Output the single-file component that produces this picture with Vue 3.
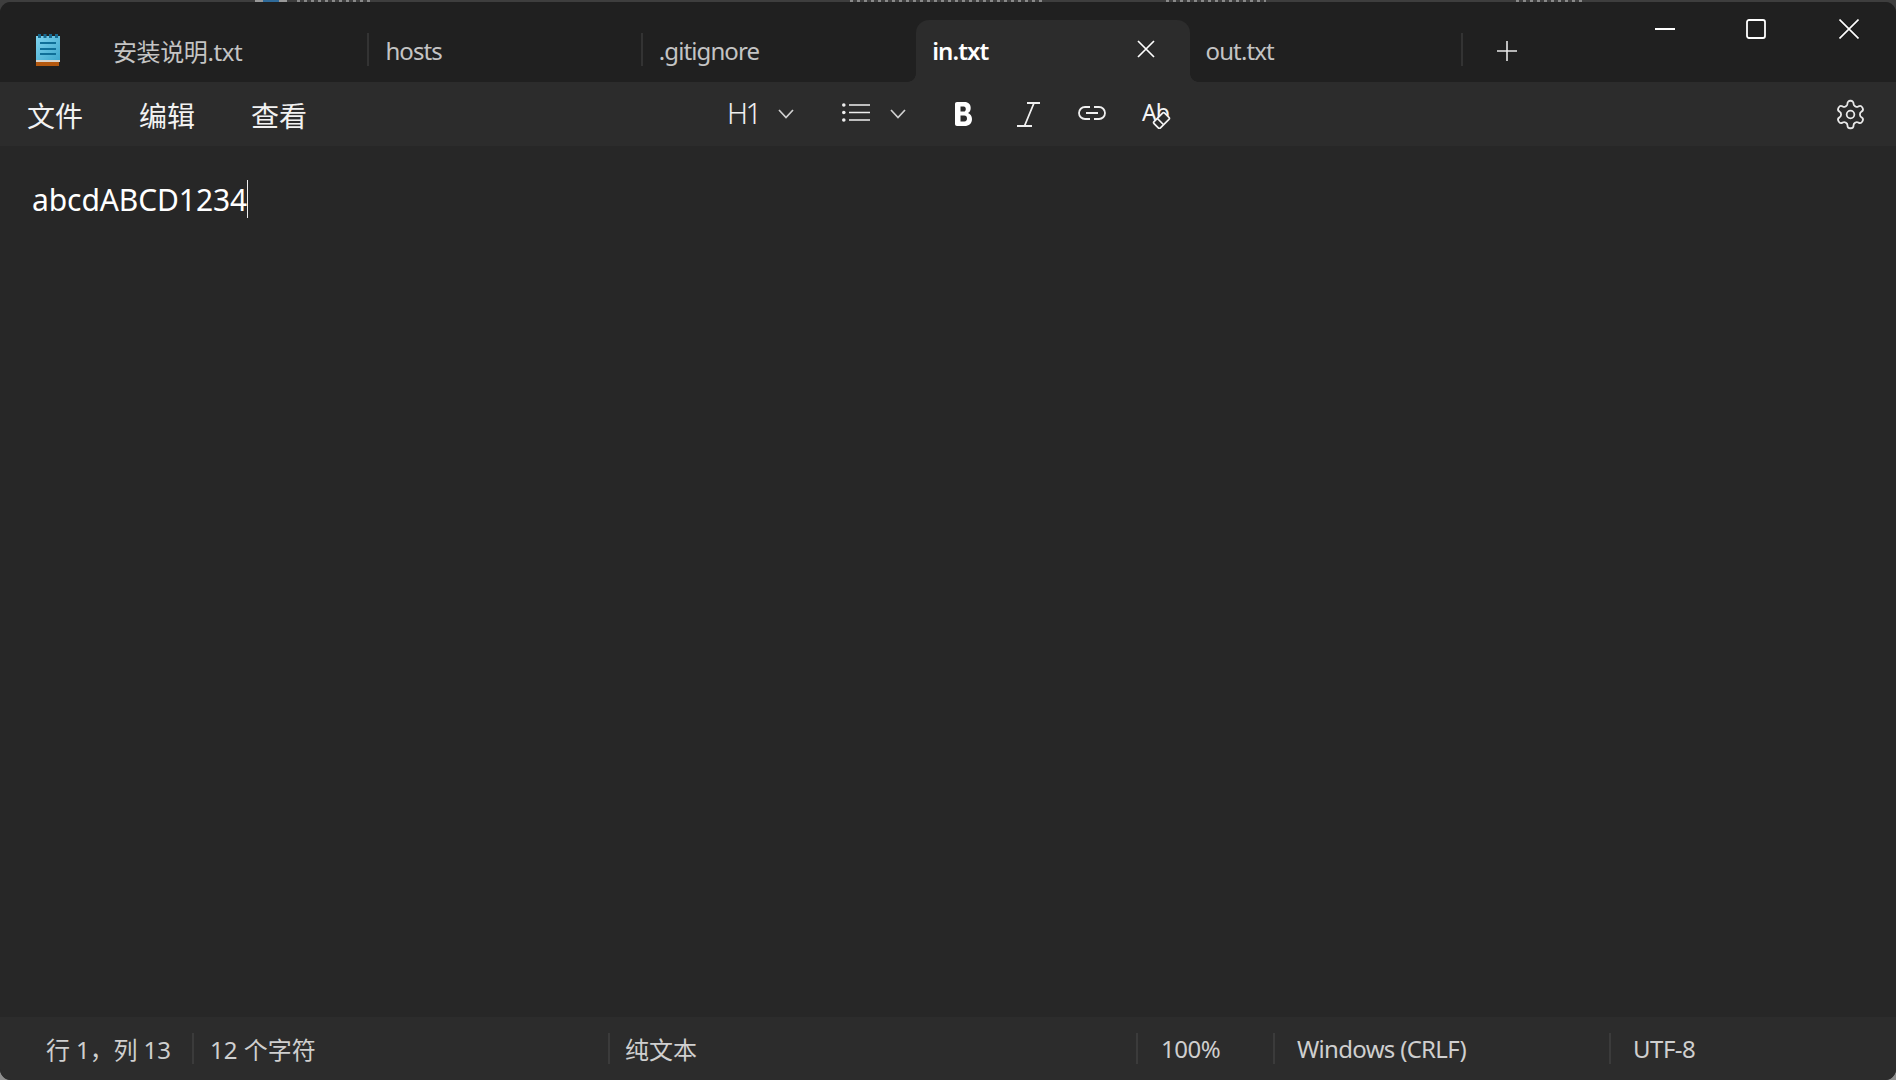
<script setup>
const tabs = [
  { name: '安装说明.txt', cjk: true },
  { name: 'hosts' },
  { name: '.gitignore', noSep: true },
  { name: 'in.txt', active: true },
  { name: 'out.txt' },
]
const menus = ['文件', '编辑', '查看']
const statusItems = [
  { text: '行 1，列 13', cls: 'st-pos' },
  { text: '12 个字符', cls: 'st-count' },
  { text: '纯文本', cls: 'st-type' },
  { text: '100%', cls: 'st-zoom' },
  { text: 'Windows (CRLF)', cls: 'st-eol' },
  { text: 'UTF-8', cls: 'st-enc' },
]
</script>

<template>
  <div class="page">
    <div class="peek">
      <span class="peek-icon"></span>
      <span class="peek-text p1"></span>
      <span class="peek-text p2"></span>
      <span class="peek-text p3"></span>
      <span class="peek-text p4"></span>
    </div>
    <div class="window">
      <div class="tabbar">
        <div class="appicon">
          <svg width="24" height="32" viewBox="0 0 24 32">
            <defs>
              <linearGradient id="pad" x1="0" y1="0" x2="1" y2="1">
                <stop offset="0" stop-color="#7fd3ee" />
                <stop offset="1" stop-color="#3ba6cc" />
              </linearGradient>
            </defs>
            <rect x="0" y="2" width="24" height="25" fill="url(#pad)" />
            <rect x="2" y="0" width="3" height="4" fill="#17698f" />
            <rect x="7.5" y="0" width="3" height="4" fill="#17698f" />
            <rect x="13" y="0" width="3" height="4" fill="#17698f" />
            <rect x="19" y="0" width="3" height="4" fill="#17698f" />
            <rect x="4" y="8" width="16" height="2" fill="#0f6f98" />
            <rect x="4" y="14" width="16" height="2" fill="#0f6f98" />
            <rect x="4" y="19" width="16" height="2" fill="#0f6f98" />
            <rect x="0" y="26" width="24" height="2" fill="#d9d4cc" />
            <rect x="0" y="28" width="23" height="4" fill="#b3580f" />
          </svg>
        </div>
        <div
          v-for="tab in tabs"
          :key="tab.name"
          class="tab"
          :class="{ active: tab.active, nosep: tab.noSep, cjk: tab.cjk }"
        >
          <span class="tab-name">{{ tab.name }}</span>
          <svg v-if="tab.active" class="tab-close" width="18" height="18" viewBox="0 0 18 18">
            <path d="M1 1 17 17M17 1 1 17" stroke="#fff" stroke-width="1.7" fill="none" />
          </svg>
        </div>
        <svg class="newtab" width="20" height="20" viewBox="0 0 20 20">
          <path d="M10 0V20M0 10H20" stroke="#e8e8e8" stroke-width="1.6" fill="none" />
        </svg>
        <div class="wincontrols">
          <svg width="20" height="20" viewBox="0 0 20 20">
            <path d="M0 10H20" stroke="#fff" stroke-width="2" fill="none" />
          </svg>
          <svg class="win-max" width="20" height="20" viewBox="0 0 20 20">
            <rect x="1" y="1" width="18" height="18" rx="2" stroke="#fff" stroke-width="1.8" fill="none" />
          </svg>
          <svg class="win-close" width="20" height="20" viewBox="0 0 20 20">
            <path d="M0.5 0.5 19.5 19.5M19.5 0.5 0.5 19.5" stroke="#fff" stroke-width="1.6" fill="none" />
          </svg>
        </div>
      </div>

      <div class="toolbar">
        <div class="menus">
          <span v-for="m in menus" :key="m" class="menu-item">{{ m }}</span>
        </div>
        <div class="format">
          <span class="h1">H1</span>
          <svg class="chev" width="16" height="10" viewBox="0 0 16 10">
            <path d="M1 1 8 8.5 15 1" stroke="#d0d0d0" stroke-width="1.7" fill="none" />
          </svg>
          <svg class="list" width="28" height="19" viewBox="0 0 28 19">
            <circle cx="1.8" cy="2" r="1.8" fill="#eee" />
            <circle cx="1.8" cy="9.5" r="1.8" fill="#eee" />
            <circle cx="1.8" cy="17" r="1.8" fill="#eee" />
            <path d="M7 2H28M7 9.5H28M7 17H28" stroke="#eee" stroke-width="1.7" fill="none" />
          </svg>
          <svg class="chev chev2" width="16" height="10" viewBox="0 0 16 10">
            <path d="M1 1 8 8.5 15 1" stroke="#d0d0d0" stroke-width="1.7" fill="none" />
          </svg>
          <svg class="bold" width="17" height="24" viewBox="0 0 17 24">
            <path
              fill="#fff"
              fill-rule="evenodd"
              d="M2 0H9.5C13.5 0 15.7 2.5 15.7 6C15.7 8.5 14.6 10.2 13 11C15.4 12 17 14 17 17C17 21.5 14 24 9.5 24H2C.8 24 0 23.2 0 22V2C0 .8.8 0 2 0ZM5.5 4.6V9.6H8.8C10.2 9.6 10.8 8.5 10.8 7C10.8 5.5 10 4.6 8.8 4.6ZM5.5 13.6V19.4H9.3C11.2 19.4 12 18.3 12 16.5C12 14.7 11 13.6 9.3 13.6Z"
            />
          </svg>
          <svg class="italic" width="23" height="25" viewBox="0 0 23 25">
            <path d="M10 1H23M0 24H15M17 1 7.5 24" stroke="#f0f0f0" stroke-width="1.8" fill="none" />
          </svg>
          <svg class="link" width="28" height="14" viewBox="0 0 28 14">
            <path
              d="M12 1H7A6 6 0 0 0 7 13H12M16 1H21A6 6 0 0 1 21 13H16M8 7H20"
              stroke="#f0f0f0"
              stroke-width="1.8"
              fill="none"
            />
          </svg>
          <div class="clearfmt">
            <span class="ab">Ab</span>
            <svg class="eraser" width="30" height="29" viewBox="0 0 30 29">
              <g transform="rotate(-45 19.5 20.5)">
                <rect x="12" y="16" width="15" height="9" rx="1.5" fill="#2c2c2c" stroke="#f4f4f4" stroke-width="1.7" />
                <path d="M18 16V25" stroke="#f4f4f4" stroke-width="1.6" />
              </g>
            </svg>
          </div>
        </div>
        <svg class="gear" width="33" height="33" viewBox="0 0 24 24">
          <path
            d="M12.22 2h-.44a2 2 0 0 0-2 2v.18a2 2 0 0 1-1 1.73l-.43.25a2 2 0 0 1-2 0l-.15-.08a2 2 0 0 0-2.73.73l-.22.38a2 2 0 0 0 .73 2.73l.15.1a2 2 0 0 1 1 1.72v.51a2 2 0 0 1-1 1.74l-.15.09a2 2 0 0 0-.73 2.73l.22.38a2 2 0 0 0 2.73.73l.15-.08a2 2 0 0 1 2 0l.43.25a2 2 0 0 1 1 1.73V20a2 2 0 0 0 2 2h.44a2 2 0 0 0 2-2v-.18a2 2 0 0 1 1-1.73l.43-.25a2 2 0 0 1 2 0l.15.08a2 2 0 0 0 2.73-.73l.22-.39a2 2 0 0 0-.73-2.73l-.15-.08a2 2 0 0 1-1-1.74v-.5a2 2 0 0 1 1-1.74l.15-.09a2 2 0 0 0 .73-2.73l-.22-.38a2 2 0 0 0-2.73-.73l-.15.08a2 2 0 0 1-2 0l-.43-.25a2 2 0 0 1-1-1.73V4a2 2 0 0 0-2-2z"
            stroke="#e8e8e8"
            stroke-width="1.3"
            fill="none"
          />
          <circle cx="12" cy="12" r="2.8" stroke="#e8e8e8" stroke-width="1.3" fill="none" />
        </svg>
      </div>

      <div class="editor">
        <span class="editor-text">abcdABCD1234</span><span class="caret"></span>
      </div>

      <div class="statusbar">
        <template v-for="(item, i) in statusItems" :key="item.text">
          <span class="st-item" :class="item.cls">{{ item.text }}</span>
          <span v-if="i < statusItems.length - 1" class="st-sep"></span>
        </template>
      </div>
    </div>
  </div>
</template>

<style>
body {
  background: #3a3a3a;
  overflow: hidden;
}
</style>

<style scoped>
.page {
  position: relative;
  width: 1896px;
  height: 1080px;
  overflow: hidden;
  background: linear-gradient(#3e3e3e 0, #3e3e3e 100px, #8f8f8f 1040px);
  font-family: "Noto Sans", "Noto Sans CJK SC", sans-serif;
}
.peek {
  position: absolute;
  top: 0;
  left: 0;
  height: 3px;
  display: flex;
  align-items: flex-start;
}
.peek-icon {
  width: 32px;
  height: 2px;
  margin-left: 255px;
  background: linear-gradient(90deg, #999 0 8px, #2f6b9a 8px 24px, #999 24px);
}
.peek-text {
  height: 2px;
  background: repeating-linear-gradient(90deg, #8a8a8a 0 3px, transparent 3px 7px);
}
.p1 {
  width: 74px;
  margin-left: 10px;
}
.p2 {
  width: 195px;
  margin-left: 479px;
}
.p3 {
  width: 100px;
  margin-left: 121px;
}
.p4 {
  width: 70px;
  margin-left: 250px;
}
.window {
  position: absolute;
  top: 2px;
  left: 0;
  width: 1896px;
  height: 1078px;
  border-radius: 11px;
  overflow: hidden;
  display: flex;
  flex-direction: column;
  background: #272727;
}
.tabbar {
  height: 80px;
  flex: none;
  display: flex;
  align-items: flex-end;
  background: #202020;
}
.appicon {
  width: 96px;
  height: 62px;
  flex: none;
  display: flex;
  align-items: flex-start;
  padding: 14px 0 0 36px;
  box-sizing: border-box;
}
.tab {
  position: relative;
  width: 273.4px;
  height: 62px;
  flex: none;
  display: flex;
  align-items: center;
  justify-content: space-between;
  box-sizing: border-box;
  padding: 0 35px 1px 16px;
  color: #c4c4c4;
  font-size: 24px;
  letter-spacing: -0.9px;
}
.tab.cjk {
  letter-spacing: -0.4px;
  padding-left: 17px;
}
.tab::after {
  content: "";
  position: absolute;
  right: 0;
  top: 13px;
  width: 2px;
  height: 33px;
  background: #333;
}
.tab.nosep::after,
.tab.active::after {
  display: none;
}
.tab.active {
  background: #2c2c2c;
  border-radius: 13px 13px 0 0;
  color: #fff;
  font-weight: 600;
}
.tab.active::before {
  content: "";
  position: absolute;
  left: -8px;
  right: -8px;
  bottom: 0;
  height: 8px;
  background:
    radial-gradient(circle at 0 0, #202020 7.5px, #2c2c2c 8px) left bottom / 8px 8px no-repeat,
    radial-gradient(circle at 100% 0, #202020 7.5px, #2c2c2c 8px) right bottom / 8px 8px no-repeat;
}
.tab-close {
  margin-top: -4px;
}
.newtab {
  flex: none;
  margin: 0 0 21px 34px;
}
.wincontrols {
  display: flex;
  margin-left: auto;
  align-self: flex-start;
  margin-top: 17px;
  margin-right: 37px;
}
.win-max {
  margin-left: 71px;
}
.win-close {
  margin-left: 73px;
}
.toolbar {
  height: 64px;
  flex: none;
  display: flex;
  align-items: center;
  padding: 0 29px 0 27px;
  background: #2c2c2c;
}
.menus {
  display: flex;
  gap: 56px;
  color: #f2f2f2;
  font-size: 28px;
  padding-top: 1px;
}
.format {
  display: flex;
  align-items: center;
  margin-left: 420px;
}
.h1 {
  color: #efefef;
  font-size: 29px;
  font-weight: 300;
  letter-spacing: -2.5px;
  width: 31px;
  margin-bottom: 4px;
}
.chev {
  margin-left: 20px;
}
.list {
  margin-left: 48px;
  margin-bottom: 4px;
}
.chev2 {
  margin-left: 20px;
}
.bold {
  margin-left: 49px;
}
.italic {
  margin-left: 45px;
}
.link {
  margin-left: 38px;
  margin-bottom: 2px;
}
.clearfmt {
  position: relative;
  width: 30px;
  height: 29px;
  margin-left: 36px;
}
.ab {
  display: block;
  color: #f4f4f4;
  font-size: 23px;
  line-height: 25px;
  letter-spacing: -1px;
}
.eraser {
  position: absolute;
  left: 0;
  top: 0;
}
.gear {
  margin-left: auto;
}
.editor {
  flex: 1;
  display: flex;
  align-items: flex-start;
  padding: 34px 0 0 32px;
  color: #fff;
  font-size: 30px;
  line-height: 40px;
  letter-spacing: -0.1px;
}
.caret {
  width: 1px;
  height: 38px;
  background: #eee;
}
.statusbar {
  height: 63px;
  flex: none;
  display: flex;
  align-items: center;
  background: #2c2c2c;
  color: #cfcfcf;
  font-size: 24px;
  letter-spacing: -0.5px;
  box-sizing: border-box;
  padding-bottom: 1px;
}
.st-item {
  box-sizing: border-box;
  white-space: nowrap;
}
.st-sep {
  width: 2px;
  height: 31px;
  background: #3b3b3b;
  flex: none;
}
.st-pos {
  width: 192px;
  padding-left: 46px;
  letter-spacing: -0.1px;
}
.st-count {
  width: 414px;
  padding-left: 16px;
  letter-spacing: 0;
}
.st-type {
  width: 526px;
  padding-left: 15px;
  letter-spacing: 0;
}
.st-zoom {
  width: 135px;
  padding-left: 23px;
}
.st-eol {
  width: 334px;
  padding-left: 22px;
  letter-spacing: -0.7px;
}
.st-enc {
  padding-left: 22px;
}
</style>
